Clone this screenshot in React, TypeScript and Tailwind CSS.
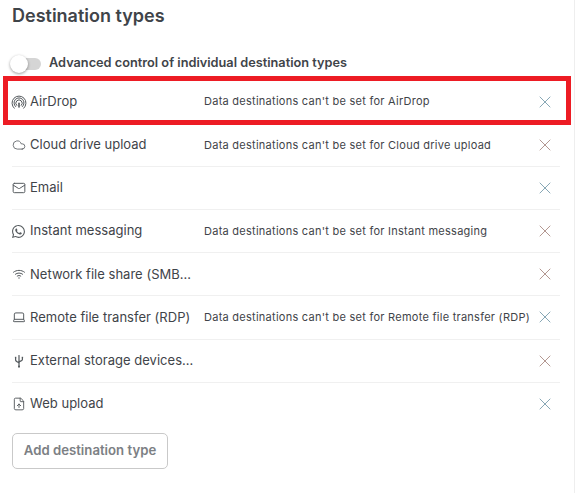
import { Cloud, FileUp, Laptop, Mail, X } from "lucide-react";
import { BsWhatsapp } from "react-icons/bs";
import type { ReactNode } from "react";

function AirdropIcon() {
  return (
    <svg width="16" height="16" viewBox="0 0 16 16" fill="none" stroke="currentColor" strokeWidth="1" strokeLinecap="round" className="-ml-px">
      <path d="M3.2 14.2A7 7 0 1 1 12.8 14.2" />
      <path d="M4.6 12.6A5 5 0 1 1 11.4 12.6" />
      <path d="M5.7 11.4A3.2 3.2 0 1 1 10.3 11.4" />
      <path d="M8 13V9.2" strokeWidth="1.6" />
    </svg>
  );
}

function WifiIcon() {
  return (
    <svg width="14" height="14" viewBox="0 0 14 14" fill="none" stroke="currentColor" strokeWidth="1" strokeLinecap="round">
      <path d="M1.5 5.2C4.6 2.7 9.4 2.7 12.5 5.2" />
      <path d="M3.4 7.2C5.4 5.6 8.6 5.6 10.6 7.2" />
      <path d="M5.2 9.1C6.2 8.3 7.8 8.3 8.8 9.1" />
      <circle cx="7" cy="11" r="0.7" fill="currentColor" stroke="none" />
    </svg>
  );
}

function UsbIcon() {
  return (
    <svg width="14" height="14" viewBox="0 0 14 14" fill="none" stroke="currentColor" strokeWidth="1.2" strokeLinecap="round">
      <path d="M7 1.5V13" />
      <path d="M3.6 4V6C3.6 7.4 5 8 7 8.8" />
      <path d="M10.4 4V5.4C10.4 6.6 9 7 7 7.6" />
      <circle cx="7" cy="12.4" r="1" fill="currentColor" stroke="none" />
      <rect x="2.9" y="2.8" width="1.4" height="1.4" fill="currentColor" stroke="none" />
      <rect x="9.7" y="2.8" width="1.4" height="1.4" fill="currentColor" stroke="none" />
    </svg>
  );
}

type Row = {
  icon: ReactNode;
  label: string;
  note?: string;
  xColor: string;
};

const rows: Row[] = [
  { icon: <AirdropIcon />, label: "AirDrop", note: "Data destinations can't be set for AirDrop", xColor: "text-[#4a7a90]" },
  { icon: <Cloud size={14} strokeWidth={1.4} />, label: "Cloud drive upload", note: "Data destinations can't be set for Cloud drive upload", xColor: "text-[#8c6259]" },
  { icon: <Mail size={14} strokeWidth={1.7} />, label: "Email", xColor: "text-[#4a7a90]" },
  { icon: <BsWhatsapp size={13} />, label: "Instant messaging", note: "Data destinations can't be set for Instant messaging", xColor: "text-[#8c6259]" },
  { icon: <WifiIcon />, label: "Network file share (SMB/NFS)", xColor: "text-[#8c6259]" },
  { icon: <Laptop size={14} strokeWidth={1.7} />, label: "Remote file transfer (RDP)", note: "Data destinations can't be set for Remote file transfer (RDP)", xColor: "text-[#4a7a90]" },
  { icon: <UsbIcon />, label: "External storage devices (USB)", xColor: "text-[#8c6259]" },
  { icon: <FileUp size={14} strokeWidth={1.6} />, label: "Web upload", xColor: "text-[#4a7a90]" },
];

export default function App() {
  return (
    <div className="relative h-[493px] w-[575px] overflow-hidden border-r border-[#eeeeee] bg-white pl-3 font-['Inter',sans-serif] text-[#3f4449]">
      <h1 className="pt-1.5 text-[18px] leading-[20px] font-semibold">Destination types</h1>

      {/* Toggle */}
      <div className="mt-[27px] flex h-[22px] items-center">
        <span className="relative block h-3 w-[29px] rounded-full bg-[#d5d5d5]">
          <span className="absolute -top-[3px] -left-0.5 block size-[18px] rounded-full bg-white shadow-[0_1px_3px_rgba(0,0,0,0.4)]" />
        </span>
        <span className="-mt-0.5 ml-2 text-[12.75px] font-semibold">Advanced control of individual destination types</span>
      </div>

      {/* Destination rows */}
      <ul className="mt-[5.6px] w-[548px]">
        {rows.map((row) => (
          <li key={row.label} className="flex h-[43.17px] items-center border-b border-[#f0f0f0] last:border-b-transparent">
            <span className="flex w-[18px] shrink-0 items-center text-[#555a5e]">{row.icon}</span>
            <span className="w-[165px] shrink-0 truncate text-[13px] tracking-[0.02px]">{row.label}</span>
            <span className="ml-[9px] grow truncate text-[11px] tracking-[0.26px] whitespace-nowrap">{row.note}</span>
            <span className={`flex w-[30px] shrink-0 justify-center ${row.xColor}`}>
              <X size={20} strokeWidth={0.8} />
            </span>
          </li>
        ))}
      </ul>

      <button className="mt-[7.4px] h-[36px] w-[156px] rounded-[5px] border border-[#c9c9c9] text-[13.2px] font-semibold text-[#7c8084]">
        Add destination type
      </button>

      {/* Red highlight over the AirDrop row */}
      <div className="absolute top-[76px] left-[3px] h-[49px] w-[568px] border-[5px] border-[#ed1c24]" />
    </div>
  );
}
